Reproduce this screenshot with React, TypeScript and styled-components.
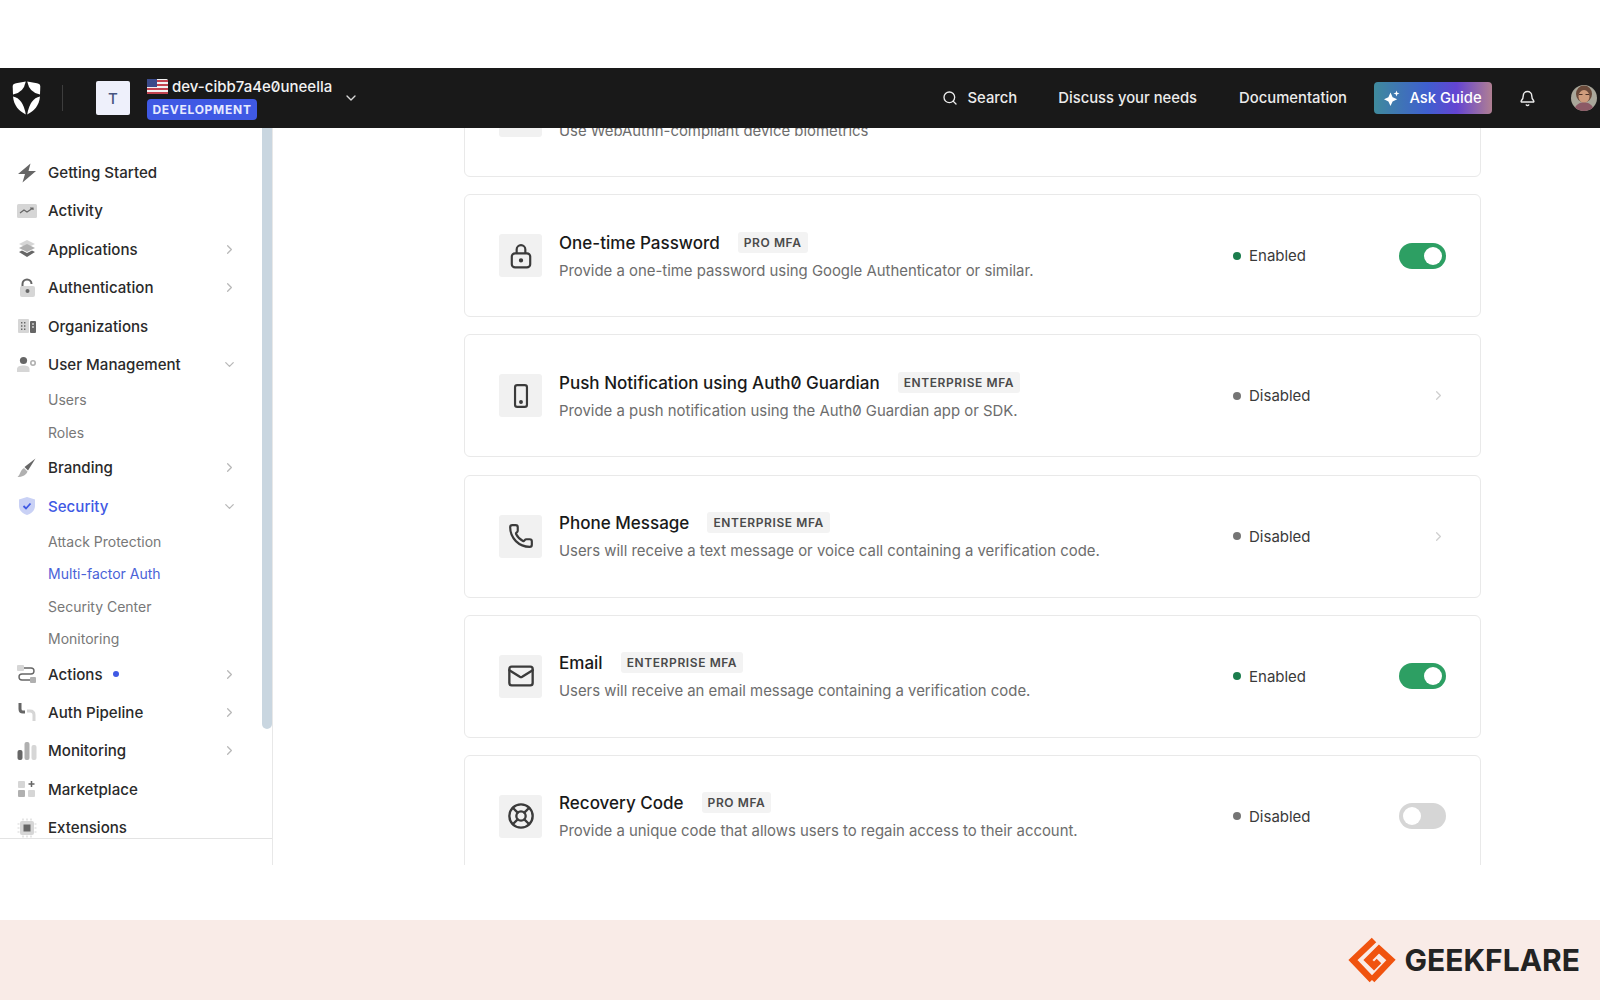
import styled, { createGlobalStyle } from 'styled-components';
import { Bell, ChevronDown, ChevronRight, LifeBuoy, Mail, Phone, Search } from 'lucide-react';
import type { ReactNode } from 'react';

const GlobalStyle = createGlobalStyle`
    html, body {
        margin: 0;
        padding: 0;
        background: #fff;
        overflow: hidden;
    }
    * {
        box-sizing: border-box;
    }
    body {
        font-family: Inter, "Liberation Sans", sans-serif;
        font-variant-numeric: slashed-zero;
        -webkit-font-smoothing: antialiased;
    }
`;

const Page = styled.div`
    width: 1600px;
    height: 1000px;
    display: flex;
    flex-direction: column;
`;

const TopGap = styled.div`
    height: 68px;
`;

const Nav = styled.header`
    height: 60px;
    background: #191919;
    color: #fff;
    display: flex;
    align-items: center;
    padding: 0 3px 0 12px;
    position: relative;
    z-index: 2;
`;

const Divider = styled.div`
    width: 1px;
    height: 26px;
    background: #3d3d3d;
    margin: 0 33px 0 21px;
`;

const TenantBox = styled.div`
    width: 34px;
    height: 34px;
    border-radius: 2px;
    background: #eef0fb;
    color: #46557f;
    font-size: 15px;
    font-weight: 500;
    display: flex;
    align-items: center;
    justify-content: center;
    margin-right: 17px;
`;

const TenantInfo = styled.div`
    display: flex;
    flex-direction: column;
    gap: 3px;
    width: 196px;
`;

const TenantName = styled.div`
    display: flex;
    align-items: center;
    gap: 4px;
    font-size: 15px;
    font-weight: 500;
    line-height: 19px;
    color: #f2f2f2;
`;

const EnvBadge = styled.div`
    width: 110px;
    height: 21px;
    border-radius: 4px;
    background: #3f59e4;
    color: #e6eaff;
    font-size: 12px;
    font-weight: 700;
    letter-spacing: 0.06em;
    display: flex;
    align-items: center;
    justify-content: center;
`;

const NavLinks = styled.nav`
    margin-left: auto;
    display: flex;
    align-items: center;
    font-size: 14.8px;
    font-weight: 500;
    color: #ececec;
`;

const SearchLink = styled.div`
    display: flex;
    align-items: center;
    gap: 10px;
    margin: 0 41px 1px 0;
`;

const NavLink = styled.div`
    margin: 0 42px 1px 0;
    white-space: nowrap;

    &:nth-child(3) {
        margin-right: 27px;
    }
`;

const AskGuide = styled.div`
    width: 118px;
    height: 32px;
    padding-bottom: 1px;
    border-radius: 4px;
    background: linear-gradient(90deg, #3f8a9c 0%, #3f5fcf 45%, #6444d2 70%, #b07f92 100%);
    display: flex;
    align-items: center;
    justify-content: center;
    gap: 9px;
    margin-right: 27px;
    color: #fff;
    white-space: nowrap;
`;

const BellWrap = styled.div`
    display: flex;
    margin-right: 35px;
`;

const Avatar = styled.div`
    width: 26px;
    height: 26px;
    flex-shrink: 0;
    border-radius: 50%;
    overflow: hidden;
`;

const Body = styled.div`
    height: 737px;
    display: flex;
`;

const Sidebar = styled.aside`
    width: 273px;
    flex-shrink: 0;
    border-right: 1px solid #e8e8e8;
    position: relative;
    display: flex;
    flex-direction: column;
`;

const SideList = styled.div`
    height: 711px;
    padding-top: 25.4px;
    overflow: hidden;
    border-bottom: 1px solid #e3e3e3;
`;

const Thumb = styled.div`
    position: absolute;
    top: 0;
    right: 0;
    width: 10px;
    height: 601px;
    border-radius: 0 0 5px 5px;
    background: #c9d6e0;
`;

const SideRow = styled.div<{ $active?: boolean }>`
    height: 38.4px;
    display: flex;
    align-items: center;
    padding-left: 17px;
    font-size: 15.1px;
    font-weight: 450;
    color: ${(p) => (p.$active ? '#3f59e4' : '#2a2a2a')};
`;

const SideIcon = styled.span`
    width: 20px;
    height: 20px;
    margin-right: 11px;
    display: flex;
    align-items: center;
    justify-content: center;
`;

const SideLabel = styled.span`
    display: flex;
    align-items: center;
    gap: 10px;
`;

const BlueDot = styled.span`
    width: 6px;
    height: 6px;
    border-radius: 50%;
    background: #3f59e4;
`;

const SideChevron = styled.span`
    position: absolute;
    left: 222px;
    display: flex;
    color: #b8b8b8;
`;

const SubRow = styled.div<{ $active?: boolean }>`
    height: 32.4px;
    display: flex;
    align-items: center;
    padding-left: 48px;
    font-size: 14px;
    color: ${(p) => (p.$active ? '#4a62d8' : '#787878')};
`;

const Main = styled.main`
    flex: 1;
    overflow: hidden;
    padding: 0 119px 0 191px;
`;

const CardList = styled.div`
    margin-top: -74px;
    display: flex;
    flex-direction: column;
    gap: 17.2px;
`;

const Card = styled.section`
    height: 123px;
    flex-shrink: 0;
    border: 1px solid #e9e9e9;
    border-radius: 6px;
    padding: 0 34px;
    display: flex;
    align-items: center;
`;

const IconBox = styled.div`
    width: 43px;
    height: 43px;
    border-radius: 3px;
    background: #f1f1f1;
    color: #3b3b3b;
    display: flex;
    align-items: center;
    justify-content: center;
    margin-right: 17px;
    flex-shrink: 0;
`;

const CardText = styled.div`
    flex: 1;
    padding-top: 2px;
    display: flex;
    flex-direction: column;
    gap: 8px;
`;

const TitleRow = styled.div`
    display: flex;
    align-items: center;
    gap: 18px;
    height: 21px;
`;

const Title = styled.div`
    font-size: 17.05px;
    font-weight: 450;
    color: #191919;
`;

const Tier = styled.span`
    height: 21px;
    padding: 0 6px;
    border-radius: 3px;
    background: #f3f3f3;
    color: #4a4a4a;
    font-size: 12px;
    font-weight: 600;
    letter-spacing: 0.05em;
    display: flex;
    align-items: center;
`;

const Desc = styled.div`
    font-size: 14.9px;
    line-height: 21px;
    color: #6d6d6d;
`;

const Status = styled.div`
    width: 166px;
    display: flex;
    align-items: center;
    gap: 8px;
    font-size: 15px;
    color: #3a3a3a;
`;

const StatusDot = styled.span<{ $on: boolean }>`
    width: 8px;
    height: 8px;
    border-radius: 50%;
    background: ${(p) => (p.$on ? '#1c7d4d' : '#757575')};
`;

const Action = styled.div`
    width: 47px;
    display: flex;
    justify-content: flex-end;
    color: #cfcfcf;
`;

const Toggle = styled.div<{ $on: boolean }>`
    width: 47px;
    height: 26px;
    border-radius: 13px;
    background: ${(p) => (p.$on ? '#2d9f63' : '#d6d6d6')};
    display: flex;
    align-items: center;
    justify-content: ${(p) => (p.$on ? 'flex-end' : 'flex-start')};
    padding: 0 4px;

    &::after {
        content: '';
        width: 18px;
        height: 18px;
        border-radius: 50%;
        background: #fff;
    }
`;

const Spacer = styled.div`
    height: 55px;
`;

const Footer = styled.footer`
    height: 80px;
    background: #f9ebe7;
    display: flex;
    align-items: center;
    justify-content: flex-end;
    padding-right: 20px;
    gap: 9px;
`;

const Brand = styled.div`
    font-size: 30px;
    font-weight: 700;
    color: #232323;
`;

const LogoMark = () => (
    <svg width="29" height="34" viewBox="0 0 29 34" fill="#fff">
        <path d="M13.8 0.5 L4 2.2 Q0.7 2.8 0.7 5.5 L1 13.4 Q11.5 12 13.8 0.5 Z" />
        <path d="M15.2 0.5 L25 2.2 Q28.3 2.8 28.3 5.5 L28 13.4 Q17.5 12 15.2 0.5 Z" />
        <path d="M1 15.6 Q11 17.5 13.8 33.5 C7 30 1.8 25 1 15.6 Z" />
        <path d="M28 15.6 Q18 17.5 15.2 33.5 C22 30 27.2 25 28 15.6 Z" />
    </svg>
);

const Flag = () => (
    <svg width="21" height="15" viewBox="0 0 21 15">
        <rect width="21" height="15" rx="1.5" fill="#f2f2f2" />
        <path d="M0 1h21v2H0zM0 5h21v2H0zM0 9h21v2H0zM0 13h21v2H0z" fill="#c2434f" />
        <rect width="10" height="8" fill="#3b4a8a" />
    </svg>
);

const Sparkle = () => (
    <svg width="16" height="16" viewBox="0 0 16 16" fill="#fff">
        <path d="M6.5 2.5 L8.6 7.2 L13.2 9.3 L8.6 11.4 L6.5 16 L4.4 11.4 L0 9.3 L4.4 7.2 Z" />
        <path d="M12.5 0.5 L13.3 2.7 L15.5 3.5 L13.3 4.3 L12.5 6.5 L11.7 4.3 L9.5 3.5 L11.7 2.7 Z" />
    </svg>
);

const AvatarPic = () => (
    <svg width="26" height="26" viewBox="0 0 26 26">
        <rect width="26" height="26" fill="#a9a79a" />
        <ellipse cx="13" cy="9" rx="8" ry="8.5" fill="#6b4a3a" />
        <ellipse cx="13" cy="11.5" rx="5.5" ry="6.5" fill="#cf9c7c" />
        <path d="M3 26 C4 19 9 17.5 13 17.5 C17 17.5 22 19 23 26 Z" fill="#8c5a66" />
        <path d="M8 9.5h3.5M14.5 9.5H18" stroke="#4a3026" strokeWidth="1" />
    </svg>
);

const GeekflareMark = () => (
    <svg width="48" height="48" viewBox="0 0 48 48" fill="none" stroke="#f0530f" strokeWidth="6.5">
        <path d="M26 4 L5 24 L24 44" />
        <path d="M24 44 L43 24 L31 13 L20 24 L26 30 L31 25" />
    </svg>
);

const g1 = '#666';
const g2 = '#b0b0b0';
const g3 = '#d6d6d6';

const sideIcons: Record<string, ReactNode> = {
    bolt: (
        <svg width="20" height="20" viewBox="0 0 20 20" fill={g1}>
            <path d="M13.5 0.5 L1 11 H8 L5.5 19.5 L19 8 H11.5 Z" />
        </svg>
    ),
    activity: (
        <svg width="20" height="16" viewBox="0 0 20 16" fill="none">
            <rect width="20" height="14" y="1" rx="1.5" fill={g3} />
            <path d="M3 10 L7 7 L10 9 L16 5 M13 5 H16 V7" stroke={g1} strokeWidth="1.2" />
        </svg>
    ),
    layers: (
        <svg width="20" height="20" viewBox="0 0 20 20">
            <path d="M10 1 L18 5 L10 9 L2 5 Z" fill={g3} />
            <path d="M2 9 L10 5 L18 9 L10 13 Z" fill={g2} />
            <path d="M2 13 L5 11.5 L10 14 L15 11.5 L18 13 L10 18 Z" fill={g1} />
        </svg>
    ),
    lock: (
        <svg width="20" height="20" viewBox="0 0 20 20">
            <path d="M5.5 9 V6 A4.5 4.5 0 0 1 14.5 6" fill="none" stroke={g1} strokeWidth="2" />
            <rect x="3" y="8" width="15" height="11" rx="2" fill={g3} />
            <circle cx="10.5" cy="13" r="2" fill={g1} />
        </svg>
    ),
    org: (
        <svg width="18" height="16" viewBox="0 0 18 16">
            <rect width="11" height="14" y="1" rx="1" fill={g3} />
            <path d="M3 4h1.4v1.4H3zM6 4h1.4v1.4H6zM3 7.3h1.4v1.4H3zM6 7.3h1.4v1.4H6zM3 10.6h1.4V12H3zM6 10.6h1.4V12H6z" fill={g1} />
            <rect x="12" y="3" width="6" height="12" rx="1" fill={g1} />
            <path d="M14 6h2M14 9h2" stroke="#fff" strokeWidth="1.2" />
        </svg>
    ),
    user: (
        <svg width="20" height="18" viewBox="0 0 20 18">
            <circle cx="6.5" cy="4.5" r="3.6" fill={g1} />
            <path d="M0 16 V13 C0 10.5 3 9.5 6.5 9.5 C10 9.5 12.5 10.5 12.5 13 V16 Z" fill={g3} />
            <circle cx="16" cy="7" r="2.2" fill="none" stroke={g2} strokeWidth="1.6" />
        </svg>
    ),
    brush: (
        <svg width="20" height="20" viewBox="0 0 20 20">
            <path d="M18.5 0.5 L7.5 9 L11 12.5 Z" fill={g1} />
            <path d="M7 10 L10.5 13.5 C9 17.5 5 19 0.5 19 C3.5 17 3 12 7 10 Z" fill={g2} />
        </svg>
    ),
    shield: (
        <svg width="18" height="20" viewBox="0 0 18 20" fill="none">
            <path d="M9 1 L17 3.5 V10 C17 14.5 13 18 9 19 C5 18 1 14.5 1 10 V3.5 Z" fill="#c9d1f5" />
            <path d="M5.5 10 L8 12.5 L12.5 7.5" stroke="#3f59e4" strokeWidth="1.8" />
        </svg>
    ),
    actions: (
        <svg width="20" height="18" viewBox="0 0 20 18" fill="none">
            <rect width="7" height="6" fill={g3} rx="1" />
            <rect x="13" y="12" width="6" height="6" rx="1" fill={g2} />
            <path d="M7 3 H14 A3 3 0 0 1 14 9 H5 A3 3 0 0 0 5 15 H13" stroke={g1} strokeWidth="1.4" />
        </svg>
    ),
    pipeline: (
        <svg width="20" height="20" viewBox="0 0 20 20" fill="none">
            <path d="M3 1 V7 C3 9 4 10 6 10 H8" stroke={g1} strokeWidth="3" />
            <path d="M10 9 H13 C15 9 17 10 17 13 V19" stroke={g3} strokeWidth="3" />
        </svg>
    ),
    bars: (
        <svg width="20" height="20" viewBox="0 0 20 20">
            <rect x="0.5" y="9" width="5" height="10" rx="2" fill={g1} />
            <rect x="7.5" y="1" width="5" height="18" rx="2" fill={g2} />
            <rect x="14.5" y="4" width="5" height="15" rx="2" fill={g3} />
        </svg>
    ),
    market: (
        <svg width="18" height="18" viewBox="0 0 18 18">
            <rect y="1" width="7" height="7" rx="1" fill={g3} />
            <rect y="10" width="7" height="7" rx="1" fill={g2} />
            <rect x="10" y="10" width="7" height="7" rx="1" fill={g3} />
            <path d="M13.5 1 V7 M10.5 4 H16.5" stroke={g1} strokeWidth="1.5" />
        </svg>
    ),
    chip: (
        <svg width="20" height="20" viewBox="0 0 20 20">
            <rect x="3" y="3" width="14" height="14" rx="2" fill={g3} />
            <rect x="6.5" y="6.5" width="7" height="7" fill={g1} />
            <path d="M6 0.5v2M10 0.5v2M14 0.5v2M6 17.5v2M10 17.5v2M14 17.5v2M0.5 6h2M0.5 10h2M0.5 14h2M17.5 6h2M17.5 10h2M17.5 14h2" stroke={g3} strokeWidth="1.2" />
        </svg>
    ),
};

type SideItem = {
    label: string;
    icon: string;
    arrow?: 'right' | 'down';
    active?: boolean;
    dot?: boolean;
    children?: { label: string; active?: boolean }[];
};

const sideItems: SideItem[] = [
    { label: 'Getting Started', icon: 'bolt' },
    { label: 'Activity', icon: 'activity' },
    { label: 'Applications', icon: 'layers', arrow: 'right' },
    { label: 'Authentication', icon: 'lock', arrow: 'right' },
    { label: 'Organizations', icon: 'org' },
    {
        label: 'User Management',
        icon: 'user',
        arrow: 'down',
        children: [{ label: 'Users' }, { label: 'Roles' }],
    },
    { label: 'Branding', icon: 'brush', arrow: 'right' },
    {
        label: 'Security',
        icon: 'shield',
        arrow: 'down',
        active: true,
        children: [
            { label: 'Attack Protection' },
            { label: 'Multi-factor Auth', active: true },
            { label: 'Security Center' },
            { label: 'Monitoring' },
        ],
    },
    { label: 'Actions', icon: 'actions', arrow: 'right', dot: true },
    { label: 'Auth Pipeline', icon: 'pipeline', arrow: 'right' },
    { label: 'Monitoring', icon: 'bars', arrow: 'right' },
    { label: 'Marketplace', icon: 'market' },
    { label: 'Extensions', icon: 'chip' },
];

const LockIcon = () => (
    <svg width="26" height="26" viewBox="0 0 24 24" fill="none" stroke="currentColor" strokeWidth="2">
        <rect x="3.5" y="9.5" width="17" height="13" rx="3" />
        <path d="M8 9.5 V6 A4 4 0 0 1 16 6 V9.5" />
        <circle cx="12" cy="16" r="1" fill="currentColor" />
    </svg>
);

const DeviceIcon = () => (
    <svg width="26" height="26" viewBox="0 0 24 24" fill="none" stroke="currentColor" strokeWidth="2">
        <rect x="6.5" y="2" width="11" height="20" rx="2" />
        <circle cx="12" cy="17.5" r="0.8" fill="currentColor" />
    </svg>
);

const FingerIcon = () => (
    <svg width="24" height="24" viewBox="0 0 24 24" fill="none" stroke="currentColor" strokeWidth="2">
        <path d="M5 12 a7 7 0 0 1 14 0 v4" />
    </svg>
);

type Method = {
    title: string;
    tier?: string;
    desc: string;
    icon: ReactNode;
    on: boolean;
    toggle: boolean;
};

const methods: Method[] = [
    {
        title: 'WebAuthn with Device Biometrics',
        desc: 'Use WebAuthn-compliant device biometrics',
        icon: <FingerIcon />,
        on: false,
        toggle: false,
    },
    {
        title: 'One-time Password',
        tier: 'PRO MFA',
        desc: 'Provide a one-time password using Google Authenticator or similar.',
        icon: <LockIcon />,
        on: true,
        toggle: true,
    },
    {
        title: 'Push Notification using Auth0 Guardian',
        tier: 'ENTERPRISE MFA',
        desc: 'Provide a push notification using the Auth0 Guardian app or SDK.',
        icon: <DeviceIcon />,
        on: false,
        toggle: false,
    },
    {
        title: 'Phone Message',
        tier: 'ENTERPRISE MFA',
        desc: 'Users will receive a text message or voice call containing a verification code.',
        icon: <Phone size={26} strokeWidth={2} />,
        on: false,
        toggle: false,
    },
    {
        title: 'Email',
        tier: 'ENTERPRISE MFA',
        desc: 'Users will receive an email message containing a verification code.',
        icon: <Mail size={28} strokeWidth={2} />,
        on: true,
        toggle: true,
    },
    {
        title: 'Recovery Code',
        tier: 'PRO MFA',
        desc: 'Provide a unique code that allows users to regain access to their account.',
        icon: <LifeBuoy size={28} strokeWidth={2} />,
        on: false,
        toggle: true,
    },
];

const App = () => {
    return (
        <Page>
            <GlobalStyle />
            <TopGap />
            <Nav>
                <LogoMark />
                <Divider />
                <TenantBox>T</TenantBox>
                <TenantInfo>
                    <TenantName>
                        <Flag />
                        dev-cibb7a4e0uneella
                    </TenantName>
                    <EnvBadge>DEVELOPMENT</EnvBadge>
                </TenantInfo>
                <ChevronDown size={16} color="#d8d8d8" />
                <NavLinks>
                    <SearchLink>
                        <Search size={16} />
                        Search
                    </SearchLink>
                    <NavLink>Discuss your needs</NavLink>
                    <NavLink>Documentation</NavLink>
                    <AskGuide>
                        <Sparkle />
                        Ask Guide
                    </AskGuide>
                    <BellWrap>
                        <Bell size={17} />
                    </BellWrap>
                    <Avatar>
                        <AvatarPic />
                    </Avatar>
                </NavLinks>
            </Nav>
            <Body>
                <Sidebar>
                    <SideList>
                        {sideItems.map((item) => (
                            <div key={item.label}>
                                <SideRow $active={item.active}>
                                    <SideIcon>{sideIcons[item.icon]}</SideIcon>
                                    <SideLabel>
                                        {item.label}
                                        {item.dot && <BlueDot />}
                                    </SideLabel>
                                    {item.arrow === 'right' && (
                                        <SideChevron>
                                            <ChevronRight size={15} />
                                        </SideChevron>
                                    )}
                                    {item.arrow === 'down' && (
                                        <SideChevron>
                                            <ChevronDown size={15} />
                                        </SideChevron>
                                    )}
                                </SideRow>
                                {item.children?.map((child) => (
                                    <SubRow key={child.label} $active={child.active}>
                                        {child.label}
                                    </SubRow>
                                ))}
                            </div>
                        ))}
                    </SideList>
                    <Thumb />
                </Sidebar>
                <Main>
                    <CardList>
                        {methods.map((m) => (
                            <Card key={m.title}>
                                <IconBox>{m.icon}</IconBox>
                                <CardText>
                                    <TitleRow>
                                        <Title>{m.title}</Title>
                                        {m.tier && <Tier>{m.tier}</Tier>}
                                    </TitleRow>
                                    <Desc>{m.desc}</Desc>
                                </CardText>
                                <Status>
                                    <StatusDot $on={m.on} />
                                    {m.on ? 'Enabled' : 'Disabled'}
                                </Status>
                                <Action>
                                    {m.toggle ? <Toggle $on={m.on} /> : <ChevronRight size={15} />}
                                </Action>
                            </Card>
                        ))}
                    </CardList>
                </Main>
            </Body>
            <Spacer />
            <Footer>
                <GeekflareMark />
                <Brand>GEEKFLARE</Brand>
            </Footer>
        </Page>
    );
};

export default App;
